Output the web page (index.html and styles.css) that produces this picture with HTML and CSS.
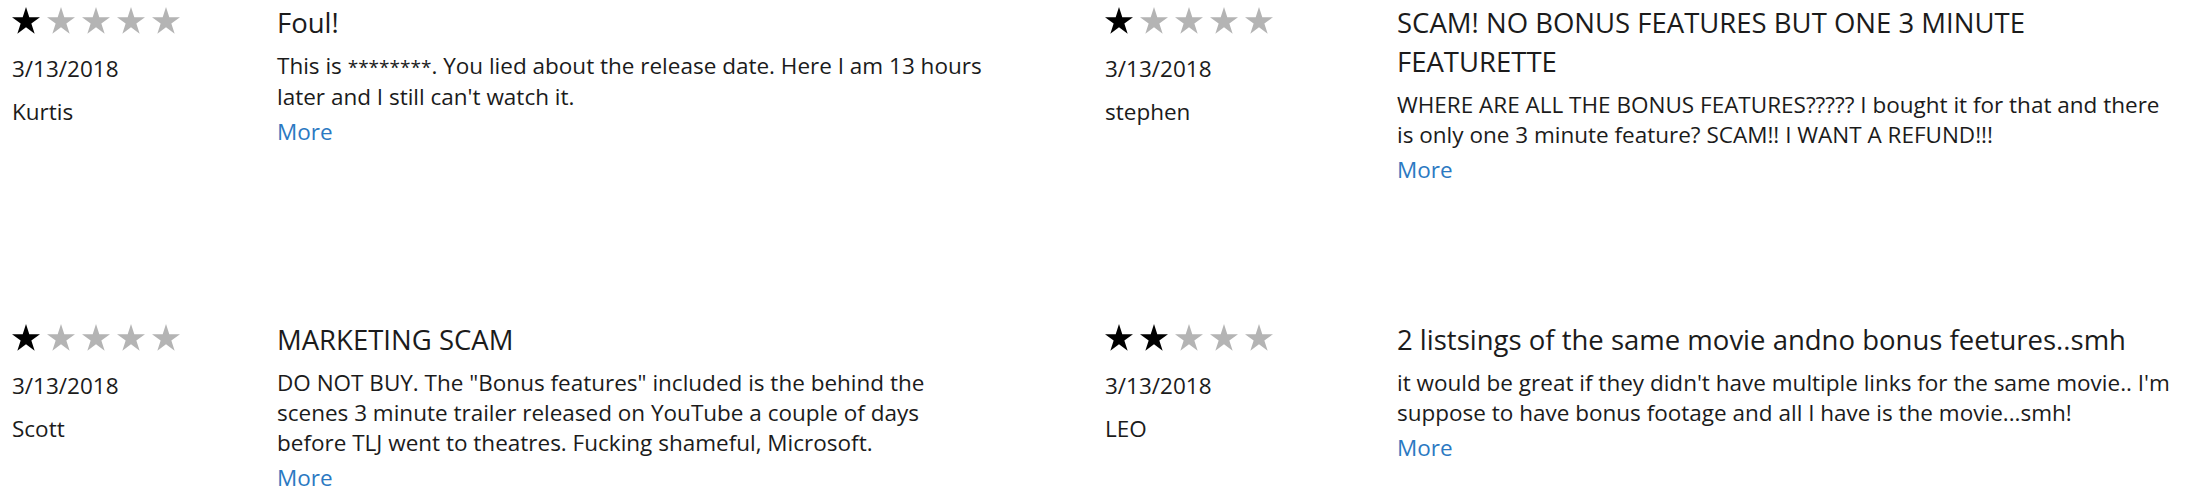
FILE: index.html
```html
<!DOCTYPE html>
<html lang="en">
<head>
    <meta charset="UTF-8">
    <title>Reviews</title>
    <link rel="stylesheet" href="styles.css">
</head>
<body>
    <svg class="defs" width="0" height="0">
        <symbol id="star" viewBox="0 0 28 27">
            <polygon points="14,0 17.3,10.17 28,10.17 19.35,16.46 22.65,26.63 14,20.34 5.35,26.63 8.65,16.46 0,10.17 10.7,10.17"/>
        </symbol>
    </svg>

    <div class="reviews">
        <div class="review col-a">
            <div class="meta">
                <div class="stars">
                    <svg class="on"><use href="#star"/></svg>
                    <svg><use href="#star"/></svg>
                    <svg><use href="#star"/></svg>
                    <svg><use href="#star"/></svg>
                    <svg><use href="#star"/></svg>
                </div>
                <div class="date">3/13/2018</div>
                <div class="author">Kurtis</div>
            </div>
            <div class="content">
                <div class="title">Foul!</div>
                <p class="text">This is <span class="censor">********</span>. You lied about the release date. Here I am 13 hours later and I still can't watch it.</p>
                <a class="more" href="#">More</a>
            </div>
        </div>

        <div class="review col-b">
            <div class="meta">
                <div class="stars">
                    <svg class="on"><use href="#star"/></svg>
                    <svg><use href="#star"/></svg>
                    <svg><use href="#star"/></svg>
                    <svg><use href="#star"/></svg>
                    <svg><use href="#star"/></svg>
                </div>
                <div class="date">3/13/2018</div>
                <div class="author">stephen</div>
            </div>
            <div class="content">
                <div class="title">SCAM! NO BONUS FEATURES BUT ONE 3 MINUTE FEATURETTE</div>
                <p class="text">WHERE ARE ALL THE BONUS FEATURES????? I bought it for that and there is only one 3 minute feature? SCAM!! I WANT A REFUND!!!</p>
                <a class="more" href="#">More</a>
            </div>
        </div>

        <div class="review col-a">
            <div class="meta">
                <div class="stars">
                    <svg class="on"><use href="#star"/></svg>
                    <svg><use href="#star"/></svg>
                    <svg><use href="#star"/></svg>
                    <svg><use href="#star"/></svg>
                    <svg><use href="#star"/></svg>
                </div>
                <div class="date">3/13/2018</div>
                <div class="author">Scott</div>
            </div>
            <div class="content">
                <div class="title">MARKETING SCAM</div>
                <p class="text">DO NOT BUY. The "Bonus features" included is the behind the scenes 3 minute trailer released on YouTube a couple of days before TLJ went to theatres. Fucking shameful, Microsoft.</p>
                <a class="more" href="#">More</a>
            </div>
        </div>

        <div class="review col-b">
            <div class="meta">
                <div class="stars">
                    <svg class="on"><use href="#star"/></svg>
                    <svg class="on"><use href="#star"/></svg>
                    <svg><use href="#star"/></svg>
                    <svg><use href="#star"/></svg>
                    <svg><use href="#star"/></svg>
                </div>
                <div class="date">3/13/2018</div>
                <div class="author">LEO</div>
            </div>
            <div class="content">
                <div class="title">2 listsings of the same movie andno bonus feetures..smh</div>
                <p class="text">it would be great if they didn't have multiple links for the same movie.. I'm suppose to have bonus footage and all I have is the movie...smh!</p>
                <a class="more" href="#">More</a>
            </div>
        </div>
    </div>
</body>
</html>
```

FILE: styles.css
```css
body {
    margin: 0;
    background: #ffffff;
    color: #1b1b1b;
    font-family: 'Open Sans', 'Noto Sans', sans-serif;
}

.defs {
    position: absolute;
    width: 0;
    height: 0;
}

.reviews {
    display: grid;
    grid-template-columns: 1093px 1fr;
    grid-template-rows: 317px auto;
}

.review {
    display: flex;
    padding: 3px 0 0 12px;
}

.col-a .meta {
    width: 265px;
}

.col-b .meta {
    width: 292px;
}

.col-a .content {
    width: 707px;
}

.col-b .content {
    width: 782px;
}

.meta {
    flex-shrink: 0;
    font-size: 22.5px;
    line-height: 30px;
}

.stars {
    display: flex;
    gap: 7px;
    margin-top: 4px;
}

.stars svg {
    width: 28px;
    height: 27px;
    fill: #b4b4b4;
}

.stars svg.on {
    fill: #000000;
}

.date {
    margin-top: 20px;
}

.author {
    margin-top: 13px;
}

.title {
    font-size: 27.5px;
    line-height: 39px;
    margin-bottom: 9px;
}

.text {
    margin: 0;
    font-size: 22.5px;
    line-height: 30px;
}

.censor {
    font-size: 19px;
}

.more {
    display: block;
    margin-top: 3px;
    font-size: 22.5px;
    line-height: 33px;
    color: #2b79c2;
    text-decoration: none;
}
```
